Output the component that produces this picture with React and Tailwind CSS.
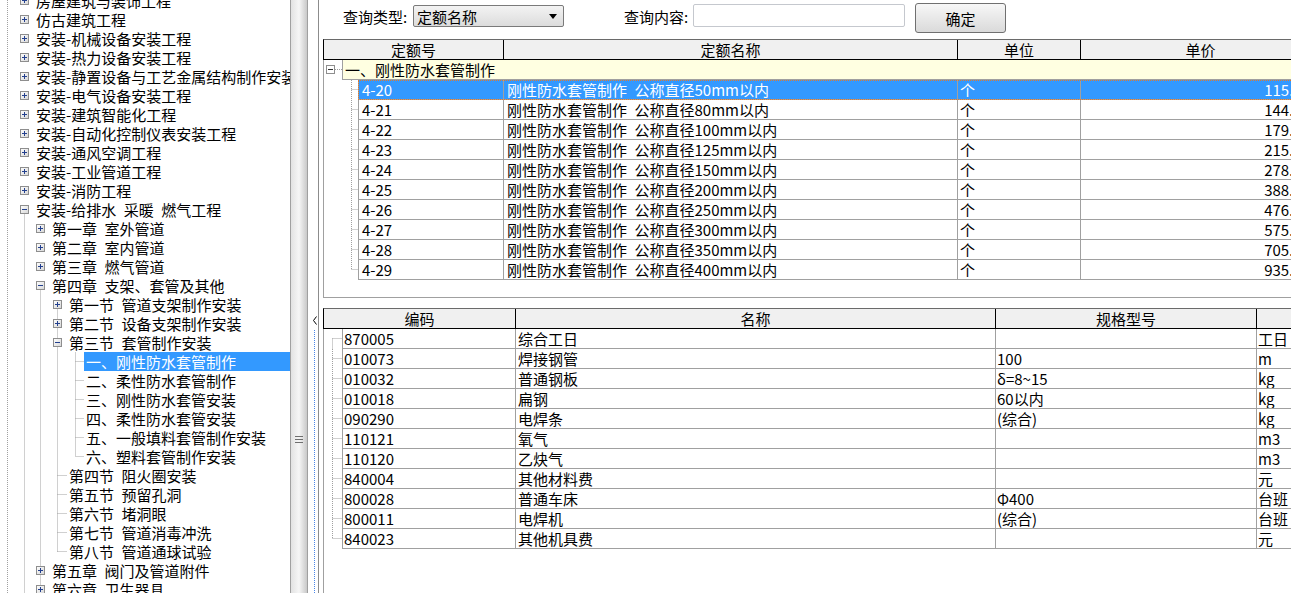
import React from "react";

const SP = "\u2002";
const sp = (s) => s.replace(/ /g, SP);

// left tree, scrolled a little so the first row is cut at the top
const tree = [
  { t: "房屋建筑与装饰工程", lv: 0, box: "+" },
  { t: "仿古建筑工程", lv: 0, box: "+" },
  { t: "安装-机械设备安装工程", lv: 0, box: "+" },
  { t: "安装-热力设备安装工程", lv: 0, box: "+" },
  { t: "安装-静置设备与工艺金属结构制作安装工程", lv: 0, box: "+" },
  { t: "安装-电气设备安装工程", lv: 0, box: "+" },
  { t: "安装-建筑智能化工程", lv: 0, box: "+" },
  { t: "安装-自动化控制仪表安装工程", lv: 0, box: "+" },
  { t: "安装-通风空调工程", lv: 0, box: "+" },
  { t: "安装-工业管道工程", lv: 0, box: "+" },
  { t: "安装-消防工程", lv: 0, box: "+" },
  { t: "安装-给排水 采暖 燃气工程", lv: 0, box: "-" },
  { t: "第一章 室外管道", lv: 1, box: "+" },
  { t: "第二章 室内管道", lv: 1, box: "+" },
  { t: "第三章 燃气管道", lv: 1, box: "+" },
  { t: "第四章 支架、套管及其他", lv: 1, box: "-" },
  { t: "第一节 管道支架制作安装", lv: 2, box: "+" },
  { t: "第二节 设备支架制作安装", lv: 2, box: "+" },
  { t: "第三节 套管制作安装", lv: 2, box: "-" },
  { t: "一、刚性防水套管制作", lv: 3, sel: true },
  { t: "二、柔性防水套管制作", lv: 3 },
  { t: "三、刚性防水套管安装", lv: 3 },
  { t: "四、柔性防水套管安装", lv: 3 },
  { t: "五、一般填料套管制作安装", lv: 3 },
  { t: "六、塑料套管制作安装", lv: 3 },
  { t: "第四节 阻火圈安装", lv: 2 },
  { t: "第五节 预留孔洞", lv: 2 },
  { t: "第六节 堵洞眼", lv: 2 },
  { t: "第七节 管道消毒冲洗", lv: 2 },
  { t: "第八节 管道通球试验", lv: 2 },
  { t: "第五章 阀门及管道附件", lv: 1, box: "+" },
  { t: "第六章 卫生器具", lv: 1, box: "+" },
];

const quota = [
  ["4-20", "50", "115.34"],
  ["4-21", "80", "144.82"],
  ["4-22", "100", "179.57"],
  ["4-23", "125", "215.05"],
  ["4-24", "150", "278.63"],
  ["4-25", "200", "388.00"],
  ["4-26", "250", "476.14"],
  ["4-27", "300", "575.32"],
  ["4-28", "350", "705.46"],
  ["4-29", "400", "935.60"],
];

const materials = [
  ["870005", "综合工日", "", "工日"],
  ["010073", "焊接钢管", "100", "m"],
  ["010032", "普通钢板", "δ=8~15", "kg"],
  ["010018", "扁钢", "60以内", "kg"],
  ["090290", "电焊条", "(综合)", "kg"],
  ["110121", "氧气", "", "m3"],
  ["110120", "乙炔气", "", "m3"],
  ["840004", "其他材料费", "", "元"],
  ["800028", "普通车床", "Φ400", "台班"],
  ["800011", "电焊机", "(综合)", "台班"],
  ["840023", "其他机具费", "", "元"],
];

const DOT = "#a0a0a0";

function Box({ minus }) {
  return (
    <svg width="9" height="9" viewBox="0 0 9 9" className="shrink-0">
      <defs>
        <linearGradient id="bx" x1="0" y1="0" x2="1" y2="1">
          <stop offset="0" stopColor="#ffffff" />
          <stop offset="1" stopColor="#d6d6d6" />
        </linearGradient>
      </defs>
      <rect x="0.5" y="0.5" width="8" height="8" fill="url(#bx)" stroke="#8e8e8e" />
      <line x1="2" y1="4.5" x2="7" y2="4.5" stroke="#23408e" />
      {!minus && <line x1="4.5" y1="2" x2="4.5" y2="7" stroke="#23408e" />}
    </svg>
  );
}

function Dl({ x1, y1, x2, y2 }) {
  return <line x1={x1} y1={y1} x2={x2} y2={y2} stroke={DOT} strokeDasharray="1 1" />;
}

const cy = (i) => 0.5 + 19 * i;
const boxMl = ["ml-[20px]", "ml-[36px]", "ml-[53px]"];
const leafPl = ["pl-[36px]", "pl-[52px]", "pl-[69px]", "pl-[84px]"];

function TreeRow({ n }) {
  if (n.box) {
    return (
      <div className="flex h-[19px] items-center whitespace-nowrap">
        <div className={boxMl[n.lv]}>
          <Box minus={n.box === "-"} />
        </div>
        <span className="ml-[7px]">{sp(n.t)}</span>
      </div>
    );
  }
  return (
    <div className={`flex h-[19px] whitespace-nowrap ${leafPl[n.lv]}`}>
      <span
        className={`flex h-full flex-1 items-center ${n.lv === 3 ? "pl-[2px]" : ""} ${
          n.sel ? "bg-[#3399ff] text-white" : ""
        }`}
      >
        {sp(n.t)}
      </span>
    </div>
  );
}

function TreePanel() {
  const leaf2 = [25, 26, 27, 28, 29];
  const leaf3 = [19, 20, 21, 22, 23, 24];
  return (
    <div className="relative h-full w-[290px] shrink-0 overflow-hidden bg-white">
      <svg className="pointer-events-none absolute left-0 top-0" width="290" height="593">
        <Dl x1={7.5} y1={0} x2={7.5} y2={593} />
        <Dl x1={24.5} y1={cy(11) + 5} x2={24.5} y2={593} />
        <Dl x1={40.5} y1={cy(15) + 5} x2={40.5} y2={593} />
        <Dl x1={57.5} y1={cy(16)} x2={57.5} y2={cy(29)} />
        {leaf2.map((i) => (
          <Dl key={i} x1={57.5} y1={cy(i)} x2={67} y2={cy(i)} />
        ))}
        <Dl x1={75.5} y1={cy(19) - 9} x2={75.5} y2={cy(24)} />
        {leaf3.map((i) => (
          <Dl key={i} x1={75.5} y1={cy(i)} x2={84} y2={cy(i)} />
        ))}
      </svg>
      <div className="relative -mt-[9px]">
        {tree.map((n, i) => (
          <TreeRow key={i} n={n} />
        ))}
      </div>
    </div>
  );
}

function Toolbar() {
  return (
    <div className="flex h-[39px] shrink-0 items-start pt-[4px]">
      <div className="ml-[24px] mt-[1px] flex h-[22px] w-[70px] shrink-0 items-center">查询类型:</div>
      <div className="mt-[1px] flex h-[22px] w-[151px] shrink-0 items-center justify-between rounded-[2px] border border-[#7a7a7a] bg-linear-to-b from-[#f3f3f3] to-[#dcdcdc] pl-[3px] pr-[6px]">
        <span>定额名称</span>
        <svg width="8" height="5" viewBox="0 0 8 5">
          <polygon points="0,0 8,0 4,5" fill="#000" />
        </svg>
      </div>
      <div className="ml-[60px] mt-[1px] flex h-[22px] w-[69px] shrink-0 items-center">查询内容:</div>
      <div className="h-[23px] w-[212px] shrink-0 rounded-[2px] border border-[#c5c8ce] bg-white" />
      <button className="-mt-[1px] ml-[10px] flex h-[30px] w-[91px] shrink-0 items-center justify-center rounded-[3px] border border-[#707070] bg-linear-to-b from-[#f7f7f7] to-[#dadada]">
        确定
      </button>
    </div>
  );
}

function HCell({ w, children }) {
  return (
    <div className={`flex h-full shrink-0 items-center justify-center border-r border-black ${w}`}>{children}</div>
  );
}

function Cell({ w, className = "", children }) {
  return (
    <div className={`flex h-full shrink-0 items-center overflow-hidden whitespace-nowrap border-r border-[#a0a0a0] ${w} ${className}`}>
      {children}
    </div>
  );
}

function QuotaTable() {
  return (
    <div className="flex h-[259px] shrink-0 flex-col border-b border-[#a0a0a0]">
      <div className="flex h-[21px] shrink-0 border-y border-l border-black border-t-[#6a6a6a] bg-[#f0f0f0]">
        <HCell w="w-[180px]">定额号</HCell>
        <HCell w="w-[454px]">定额名称</HCell>
        <HCell w="w-[123px]">单位</HCell>
        <HCell w="w-[240px]">单价</HCell>
      </div>
      <div className="flex flex-1 flex-col border-l border-[#a0a0a0]">
        <div className="flex h-[20px] shrink-0">
          <svg width="18" height="20" className="shrink-0">
            <Dl x1={11} y1={9.5} x2={18} y2={9.5} />
            <g transform="translate(2 5)">
              <rect x="0.5" y="0.5" width="8" height="8" fill="#fff" stroke="#8e8e8e" />
              <line x1="2" y1="4.5" x2="7" y2="4.5" stroke="#333" />
            </g>
          </svg>
          <div className="flex min-w-[1000px] flex-1 items-center whitespace-nowrap border-b border-l border-[#a0a0a0] bg-[#ffffe1] pl-[2px]">
            一、刚性防水套管制作
          </div>
        </div>
        {quota.map(([code, d, price], i) => {
          const sel = i === 0;
          const last = i === quota.length - 1;
          return (
            <div key={code} className="flex h-[20px] shrink-0">
              <svg width="34" height="20" className="shrink-0">
                <Dl x1={27.5} y1={0} x2={27.5} y2={last ? 9.5 : 20} />
                <Dl x1={27.5} y1={9.5} x2={34} y2={9.5} />
              </svg>
              <div
                className={`flex shrink-0 border-b border-l border-[#a0a0a0] ${
                  sel ? "bg-[#3399ff] text-white outline-1 -outline-offset-1 outline-dotted outline-[#e0792c]" : ""
                }`}
              >
                <Cell w="w-[145px]" className="pl-[3px]">{code}</Cell>
                <Cell w="w-[454px]" className="pl-[3px]">{sp(`刚性防水套管制作 公称直径${d}mm以内`)}</Cell>
                <Cell w="w-[123px]" className="pl-[2px]">个</Cell>
                <Cell w="w-[240px]" className="justify-end pr-[10px]">{price}</Cell>
              </div>
            </div>
          );
        })}
      </div>
    </div>
  );
}

function MaterialTable() {
  return (
    <div className="mt-[10px] flex flex-1 flex-col">
      <div className="flex h-[21px] shrink-0 border-y border-l border-black border-t-[#6a6a6a] bg-[#f0f0f0]">
        <HCell w="w-[192px]">编码</HCell>
        <HCell w="w-[480px]">名称</HCell>
        <HCell w="w-[261px]">规格型号</HCell>
        <HCell w="w-[100px]">单位</HCell>
      </div>
      <div className="flex flex-1 flex-col border-l border-[#a0a0a0]">
        {materials.map(([code, name, spec, unit], i) => {
          const first = i === 0;
          const last = i === materials.length - 1;
          return (
            <div key={code} className="flex h-[20px] shrink-0">
              <svg width="18" height="20" className="shrink-0">
                <Dl x1={8.5} y1={first ? 9.5 : 0} x2={8.5} y2={last ? 9.5 : 20} />
                <Dl x1={8.5} y1={9.5} x2={18} y2={9.5} />
              </svg>
              <div className="flex shrink-0 border-b border-l border-[#a0a0a0]">
                <Cell w="w-[173px]" className="pl-[1px]">{code}</Cell>
                <Cell w="w-[480px]" className="pl-[2px]">{name}</Cell>
                <Cell w="w-[261px]" className="pl-[1px]">{spec}</Cell>
                <Cell w="w-[100px]" className="pl-[1px]">{unit}</Cell>
              </div>
            </div>
          );
        })}
      </div>
    </div>
  );
}

export default function App() {
  return (
    <div className="flex h-[593px] w-[1291px] overflow-hidden bg-white font-['Noto_Sans_CJK_SC',sans-serif] text-[15px] leading-[19px] text-black">
      <TreePanel />
      {/* tree scrollbar thumb */}
      <div className="flex h-full w-[18px] shrink-0 flex-col items-center border-x border-[#a0a0a0] bg-linear-to-r from-[#e2e2e2] via-[#f6f6f6] to-[#c9c9c9] pt-[435px]">
        <svg width="8" height="9" viewBox="0 0 8 9">
          <line x1="0" y1="1.5" x2="8" y2="1.5" stroke="#6e6e6e" />
          <line x1="0" y1="4.5" x2="8" y2="4.5" stroke="#6e6e6e" />
          <line x1="0" y1="7.5" x2="8" y2="7.5" stroke="#6e6e6e" />
        </svg>
      </div>
      {/* splitter */}
      <div className="flex h-full w-[10px] shrink-0 flex-col bg-white pt-[316px]">
        <svg width="10" height="9" viewBox="0 0 10 9">
          <polyline points="8.5,0.5 5.5,4.5 8.5,8.5" fill="none" stroke="#000" />
        </svg>
        <div className="ml-[6px] mt-[5px] flex-1 border-l border-dotted border-[#4a86e8]" />
      </div>
      <div className="flex h-full min-w-0 flex-1 flex-col overflow-hidden border-l border-[#8c8c8c]">
        <Toolbar />
        <div className="flex flex-1 flex-col pl-[4px]">
          <QuotaTable />
          <MaterialTable />
        </div>
      </div>
    </div>
  );
}
